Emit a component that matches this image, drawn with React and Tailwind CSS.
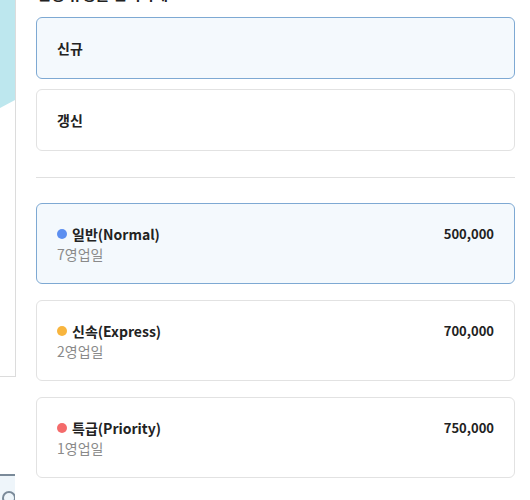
import React from "react";

const font = { fontFamily: '"Noto Sans CJK KR", "Noto Sans", sans-serif' };

function Dot({ color }) {
  return <span className={`inline-block w-[10px] h-[10px] rounded-full mr-[5px] ${color}`} />;
}

function SpeedCard({ selected, dot, title, days, price }) {
  return (
    <div
      className={`h-[81px] rounded-[6px] border px-5 py-5 flex justify-between ${
        selected ? "border-[#7ea9d3] bg-[#f4f9fd]" : "border-[#e2e2e2] bg-white"
      }`}
    >
      <div className="flex flex-col">
        <div className="flex items-center h-5 text-[14px] font-semibold text-[#222]">
          <Dot color={dot} />
          {title}
        </div>
        <div className="h-5 leading-5 text-[14px] text-[#8a8a8a]">{days}</div>
      </div>
      <div className="h-5 leading-5 text-[13px] font-semibold text-[#222]">{price}</div>
    </div>
  );
}

export default function App() {
  return (
    <div className="w-[530px] h-[500px] bg-white flex overflow-hidden" style={font}>
      <div className="w-[16px] shrink-0 flex flex-col">
        <div className="h-[377px] border-r border-b border-[#dcdcdc] relative overflow-hidden">
          <svg className="absolute left-0 top-0" width="16" height="110">
            <polygon points="0,0 15,0 15,100 0,108" fill="#bde7ee" />
          </svg>
        </div>
        <div className="mt-[97px] h-[2px] bg-[#7a8a99] mr-px" />
        <div className="flex-1 bg-[#eef5fa] mr-px relative overflow-hidden">
          <div className="absolute left-[2px] top-[15px] w-[14px] h-[14px] rounded-full border-2 border-[#7a8a99]" />
        </div>
      </div>
      <div className="ml-5 w-[479px] flex flex-col">
        <div className="-mt-[16px] h-5 text-[15px] font-bold text-[#222] leading-5 pl-px">
          신청 유형을 선택하세요
        </div>
        <div className="mt-[13px] flex flex-col gap-[10px]">
          <div className="h-[62px] rounded-[6px] border border-[#7ea9d3] bg-[#f4f9fd] px-5 flex items-center text-[14px] font-bold text-[#222]">
            신규
          </div>
          <div className="h-[62px] rounded-[6px] border border-[#e2e2e2] bg-white px-5 flex items-center text-[14px] font-bold text-[#222]">
            갱신
          </div>
        </div>
        <div className="h-px bg-[#e0e0e0] mt-[26px] mb-[25px]" />
        <div className="flex flex-col gap-4">
          <SpeedCard selected dot="bg-[#5d8ff0]" title="일반(Normal)" days="7영업일" price="500,000" />
          <SpeedCard dot="bg-[#f8b53e]" title="신속(Express)" days="2영업일" price="700,000" />
          <SpeedCard dot="bg-[#f46b6b]" title="특급(Priority)" days="1영업일" price="750,000" />
        </div>
      </div>
    </div>
  );
}
